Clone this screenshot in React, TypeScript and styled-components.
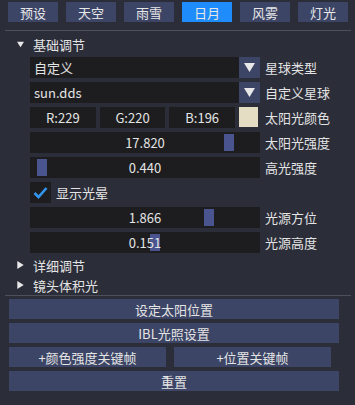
import React from 'react';
import styled, { createGlobalStyle } from 'styled-components';

const GlobalStyle = createGlobalStyle`
  html, body {
    margin: 0;
    padding: 0;
    background: #2b2d38;
  }
  body {
    font-family: "Noto Sans CJK SC", "Noto Sans", sans-serif;
    font-size: 13px;
    color: #e4e4e4;
  }
`;

// --- Styled Components ---

const Panel = styled.div`
  width: 355px;
  height: 405px;
  padding-top: 2px;
  box-sizing: border-box;
  background: #2b2d38;
  display: flex;
  flex-direction: column;
`;

const TabBar = styled.div`
  display: flex;
  gap: 8px;
  padding-left: 8px;
  height: 20px;
`;

const TabButton = styled.div<{ $active?: boolean }>`
  width: 50px;
  height: 20px;
  display: flex;
  align-items: center;
  justify-content: center;
  background: ${(p) => (p.$active ? '#1e8cfa' : '#3c4566')};
  color: #e8e8e8;
`;

const Separator = styled.div<{ $top: number }>`
  height: 1px;
  margin: ${(p) => p.$top}px 4px 0 5px;
  background: #4d4f5c;
`;

const TreeNode = styled.div<{ $top?: number }>`
  height: 20px;
  margin-top: ${(p) => p.$top ?? 0}px;
  display: flex;
  align-items: center;
  padding-left: 17px;
  gap: 9px;
`;

const Rows = styled.div`
  display: flex;
  flex-direction: column;
  gap: 4px;
  margin-top: 3px;
  padding-left: 30px;
`;

const Row = styled.div`
  display: flex;
  align-items: center;
  height: 21px;
`;

const Field = styled.div`
  width: 230px;
  height: 21px;
  display: flex;
  flex-shrink: 0;
`;

const Label = styled.span`
  margin-left: 5px;
  white-space: nowrap;
`;

const ComboText = styled.div`
  flex: 1;
  background: #1d1d1f;
  display: flex;
  align-items: center;
  padding-left: 4px;
`;

const ComboArrow = styled.div`
  width: 21px;
  background: #3c4566;
  display: flex;
  align-items: center;
  justify-content: center;
`;

const ColorBoxes = styled.div`
  display: flex;
  gap: 4px;
  width: 205px;
`;

const ColorBox = styled.div`
  flex: 1;
  background: #1d1d1f;
  display: flex;
  align-items: center;
  justify-content: center;
`;

const Swatch = styled.div<{ $color: string }>`
  width: 19px;
  height: 20px;
  margin-left: 4px;
  background: ${(p) => p.$color};
`;

const SliderTrack = styled.div`
  position: relative;
  flex: 1;
  background: #1d1d1f;
  display: flex;
  align-items: center;
  justify-content: center;
`;

const SliderGrab = styled.div`
  position: absolute;
  top: 2px;
  width: 10px;
  height: 17px;
  background: #4a5590;
`;

const SliderValue = styled.span`
  position: relative;
`;

const CheckBox = styled.div`
  width: 21px;
  height: 21px;
  background: #1d1d1f;
  display: flex;
  align-items: center;
  justify-content: center;
`;

const Buttons = styled.div`
  display: flex;
  flex-direction: column;
  gap: 4px;
  margin-top: 3px;
  padding-left: 9px;
`;

const ButtonRow = styled.div`
  display: flex;
  gap: 8px;
`;

const Button = styled.div<{ $width: number }>`
  width: ${(p) => p.$width}px;
  height: 20px;
  background: #3c4566;
  display: flex;
  align-items: center;
  justify-content: center;
`;

// --- Icons ---

const Down = ({ size = 7 }: { size?: number }) => (
  <svg width={size} height={size} viewBox="0 0 10 10">
    <polygon points="0,1 10,1 5,9" fill="#e8e8e8" />
  </svg>
);

const Right = () => (
  <svg width="7" height="8" viewBox="0 0 8 10">
    <polygon points="0,0 8,5 0,10" fill="#e8e8e8" />
  </svg>
);

const Check = () => (
  <svg width="15" height="13" viewBox="0 0 15 13">
    <polyline points="1.5,7 5.5,11 13.5,2" fill="none" stroke="#3296f0" strokeWidth="2.6" />
  </svg>
);

// --- Component ---

const Slider = ({ value, grab }: { value: string; grab: number }) => (
  <SliderTrack>
    <SliderGrab style={{ left: grab }} />
    <SliderValue>{value}</SliderValue>
  </SliderTrack>
);

const tabs = ['预设', '天空', '雨雪', '日月', '风雾', '灯光'];

export default function App() {
  return (
    <Panel>
      <GlobalStyle />
      <TabBar>
        {tabs.map((t) => (
          <TabButton key={t} $active={t === '日月'}>{t}</TabButton>
        ))}
      </TabBar>
      <Separator $top={8} />
      <TreeNode $top={3}>
        <Down />
        <span>基础调节</span>
      </TreeNode>
      <Rows>
        <Row>
          <Field>
            <ComboText>自定义</ComboText>
            <ComboArrow><Down size={11} /></ComboArrow>
          </Field>
          <Label>星球类型</Label>
        </Row>
        <Row>
          <Field>
            <ComboText>sun.dds</ComboText>
            <ComboArrow><Down size={11} /></ComboArrow>
          </Field>
          <Label>自定义星球</Label>
        </Row>
        <Row>
          <Field>
            <ColorBoxes>
              <ColorBox>R:229</ColorBox>
              <ColorBox>G:220</ColorBox>
              <ColorBox>B:196</ColorBox>
            </ColorBoxes>
            <Swatch $color="rgb(229,220,196)" />
          </Field>
          <Label>太阳光颜色</Label>
        </Row>
        <Row>
          <Field><Slider value="17.820" grab={194} /></Field>
          <Label>太阳光强度</Label>
        </Row>
        <Row>
          <Field><Slider value="0.440" grab={7} /></Field>
          <Label>高光强度</Label>
        </Row>
        <Row>
          <CheckBox><Check /></CheckBox>
          <Label>显示光晕</Label>
        </Row>
        <Row>
          <Field><Slider value="1.866" grab={174} /></Field>
          <Label>光源方位</Label>
        </Row>
        <Row>
          <Field><Slider value="0.151" grab={120} /></Field>
          <Label>光源高度</Label>
        </Row>
      </Rows>
      <TreeNode $top={2}>
        <Right />
        <span>详细调节</span>
      </TreeNode>
      <TreeNode>
        <Right />
        <span>镜头体积光</span>
      </TreeNode>
      <Separator $top={0} />
      <Buttons>
        <Button $width={330}>设定太阳位置</Button>
        <Button $width={330}>IBL光照设置</Button>
        <ButtonRow>
          <Button $width={157}>+颜色强度关键帧</Button>
          <Button $width={157}>+位置关键帧</Button>
        </ButtonRow>
        <Button $width={330}>重置</Button>
      </Buttons>
    </Panel>
  );
}
